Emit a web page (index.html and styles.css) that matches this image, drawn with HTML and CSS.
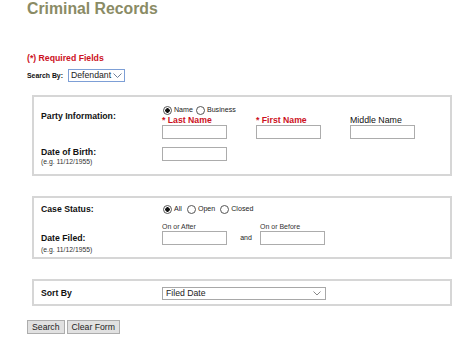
FILE: index.html
```html
<!DOCTYPE html>
<html lang="en">

<head>
  <meta charset="UTF-8">
  <title>Criminal Records</title>
  <link rel="stylesheet" href="styles.css">
</head>

<body>
  <div class="page">
    <h1 class="title">Criminal Records</h1>
    <p class="required">(*) Required Fields</p>

    <div class="search-by">
      <label for="searchBy" class="search-label">Search By:</label>
      <div class="select-wrap select-type">
        <select id="searchBy">
          <option>Defendant</option>
          <option>Attorney</option>
        </select>
        <svg class="chevron" width="9" height="5" viewBox="0 0 9 5">
          <path d="M0.5 0.5 L4.5 4.5 L8.5 0.5" fill="none" stroke="#6f7f99" stroke-width="1" />
        </svg>
      </div>
    </div>

    <form id="searchForm">
      <div class="panel panel-party">
        <div class="row row-party">
          <div class="label-cell"><span class="label">Party Information:</span></div>
          <div class="field-cell">
            <div class="radios">
              <label><input type="radio" name="partyType" checked>Name</label>
              <label><input type="radio" name="partyType">Business</label>
            </div>
            <div class="names">
              <div class="name-col">
                <label for="lastName" class="field-label req">* Last Name</label>
                <input type="text" id="lastName" class="text">
              </div>
              <div class="name-col">
                <label for="firstName" class="field-label req">* First Name</label>
                <input type="text" id="firstName" class="text">
              </div>
              <div class="name-col">
                <label for="middleName" class="field-label">Middle Name</label>
                <input type="text" id="middleName" class="text">
              </div>
            </div>
          </div>
        </div>

        <div class="row row-dob">
          <div class="label-cell">
            <label for="dob" class="label">Date of Birth:</label>
            <span class="hint">(e.g. 11/12/1955)</span>
          </div>
          <div class="field-cell">
            <input type="text" id="dob" class="text">
          </div>
        </div>
      </div>

      <div class="panel panel-case">
        <div class="row row-status">
          <div class="label-cell"><span class="label">Case Status:</span></div>
          <div class="field-cell">
            <div class="radios radios-status">
              <label><input type="radio" name="status" checked>All</label>
              <label><input type="radio" name="status">Open</label>
              <label><input type="radio" name="status">Closed</label>
            </div>
          </div>
        </div>

        <div class="row row-filed">
          <div class="label-cell">
            <span class="label">Date Filed:</span>
            <span class="hint hint-filed">(e.g. 11/12/1955)</span>
          </div>
          <div class="field-cell dates">
            <div class="date-col">
              <label for="after" class="small-label">On or After</label>
              <input type="text" id="after" class="text">
            </div>
            <span class="and">and</span>
            <div class="date-col">
              <label for="before" class="small-label">On or Before</label>
              <input type="text" id="before" class="text">
            </div>
          </div>
        </div>
      </div>

      <div class="panel panel-sort">
        <div class="row row-sort">
          <div class="label-cell"><label for="sortBy" class="label">Sort By</label></div>
          <div class="field-cell">
            <div class="select-wrap select-sort">
              <select id="sortBy">
                <option>Filed Date</option>
                <option>Case Number</option>
              </select>
              <svg class="chevron" width="8" height="5" viewBox="0 0 8 5">
                <path d="M0.5 0.5 L4 4 L7.5 0.5" fill="none" stroke="#888" stroke-width="1" />
              </svg>
            </div>
          </div>
        </div>
      </div>

      <div class="btn-group">
        <button type="submit">Search</button>
        <button type="reset">Clear Form</button>
      </div>
    </form>
  </div>
</body>

</html>
```

FILE: styles.css
```css
* {
  box-sizing: border-box;
}

body {
  margin: 0;
  font-family: "Liberation Sans", Arial, sans-serif;
  color: #111;
  background: #fff;
}

.page {
  padding: 0 27px;
}

.title {
  margin: 0;
  font-size: 15.8px;
  line-height: 17px;
  font-weight: bold;
  color: #8a8b65;
}

.required {
  margin: 36px 0 0;
  font-size: 8.7px;
  line-height: 10px;
  font-weight: bold;
  color: #cc1122;
}

.search-by {
  display: flex;
  align-items: center;
  gap: 5px;
  margin-top: 6px;
  height: 13px;
}

.search-label {
  font-size: 6.9px;
  font-weight: bold;
}

.select-wrap {
  position: relative;
  display: block;
  width: max-content;
}

.select-wrap select {
  appearance: none;
  -webkit-appearance: none;
  display: block;
  height: 13px;
  margin: 0;
  padding: 0 0 0 2px;
  font-family: inherit;
  font-size: 8.7px;
  line-height: 11px;
  color: #222;
  background: #fff;
  border-radius: 0;
}

.select-type select {
  width: 57px;
  border: 1px solid #7d9fd6;
}

.select-sort select {
  width: 164px;
  border: 1px solid #a8a8a8;
  padding-left: 3px;
}

.chevron {
  position: absolute;
  top: 4px;
}

.select-type .chevron {
  right: 3px;
}

.select-sort .chevron {
  right: 5px;
}

form {
  margin: 0;
}

.panel {
  width: 420px;
  margin-left: 5px;
  border: 2px solid #d6d6d6;
  padding-left: 7px;
}

.panel-party {
  margin-top: 13px;
  padding-top: 8px;
  padding-bottom: 9px;
}

.panel-case {
  margin-top: 20px;
  padding-top: 6px;
  padding-bottom: 3px;
}

.panel-sort {
  margin-top: 20px;
  padding-top: 6px;
  padding-bottom: 4px;
}

.row {
  display: grid;
  grid-template-columns: 121px 1fr;
}

.label-cell {
  display: flex;
  flex-direction: column;
}

.label {
  font-size: 8.7px;
  line-height: 11px;
  font-weight: bold;
  color: #111;
}

.hint {
  font-size: 6.8px;
  line-height: 7px;
  color: #333;
}

.row-party .label-cell {
  padding-top: 6px;
}

.row-dob {
  margin-top: 8px;
}

.radios {
  display: flex;
  height: 10px;
  margin-left: 1px;
  font-size: 7.1px;
  line-height: 10px;
  color: #222;
}

.radios label {
  display: flex;
  align-items: center;
  margin-right: 3px;
}

.radios input {
  appearance: none;
  -webkit-appearance: none;
  width: 9px;
  height: 9px;
  margin: 0 2px 0 0;
  border: 1px solid #555;
  border-radius: 50%;
  background: #fff;
}

.radios input:checked {
  background: radial-gradient(circle, #111 0 2px, #fff 2.5px);
}

.radios-status {
  height: 11px;
  line-height: 11px;
}

.radios-status label {
  margin-right: 5px;
}

.names {
  display: flex;
}

.name-col {
  width: 94px;
  display: flex;
  flex-direction: column;
}

.field-label {
  font-size: 8.8px;
  line-height: 10px;
  color: #111;
}

.field-label.req {
  font-weight: bold;
  font-size: 8.7px;
  color: #cc1122;
}

.text {
  display: block;
  width: 65px;
  height: 14px;
  margin: 0;
  padding: 0 2px;
  border: 1px solid #acacac;
  border-radius: 0;
  background: #fff;
}

.row-filed {
  margin-top: 8px;
}

.row-filed .label-cell {
  padding-top: 10px;
}

.hint-filed {
  margin-top: 2px;
  line-height: 8px;
}

.dates {
  display: flex;
  align-items: flex-end;
  align-self: start;
}

.date-col {
  display: flex;
  flex-direction: column;
}

.small-label {
  font-size: 7px;
  line-height: 8px;
  color: #333;
}

.and {
  width: 33px;
  padding-left: 5px;
  text-align: center;
  font-size: 7px;
  line-height: 14px;
  color: #222;
}

.row-sort .label {
  line-height: 13px;
}

.btn-group {
  display: flex;
  gap: 2px;
  margin-top: 14px;
}

button {
  height: 14px;
  margin: 0;
  padding: 0 4px;
  font-family: inherit;
  font-size: 8.7px;
  line-height: 12px;
  color: #222;
  background: #e1e1e1;
  border: 1px solid #adadad;
  border-radius: 0;
}
```
